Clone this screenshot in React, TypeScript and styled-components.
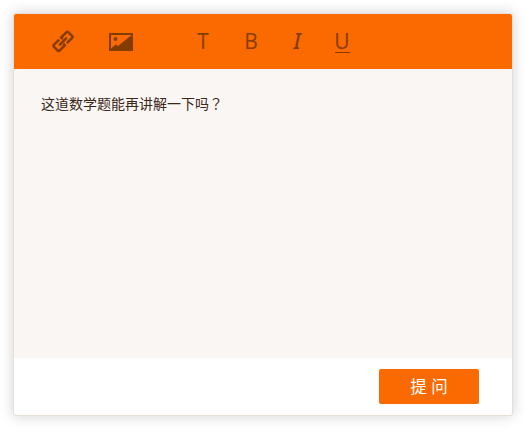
import React from 'react';
import styled, { createGlobalStyle } from 'styled-components';

const ink = '#843c02';
const orange = '#fa6a00';

const GlobalStyle = createGlobalStyle`
  * { box-sizing: border-box; }
  body {
    margin: 0;
    background: #fff;
    font-family: "Noto Sans", "Noto Sans CJK SC", sans-serif;
  }
`;

const Page = styled.main`
  width: 526px;
  height: 429px;
  padding: 13px;
  overflow: hidden;
`;

const Card = styled.section`
  display: flex;
  flex-direction: column;
  width: 500px;
  height: 403px;
  border: 1px solid #e6dfd8;
  border-radius: 3px;
  background: #fff;
  box-shadow: 0 0 14px rgba(0, 0, 0, 0.18);
  overflow: hidden;
`;

const Toolbar = styled.header`
  display: flex;
  align-items: center;
  height: 55px;
  padding-left: 34px;
  background: ${orange};
`;

const Tool = styled.button<{ $width: number; $gap?: number }>`
  display: flex;
  align-items: center;
  justify-content: center;
  width: ${(p) => p.$width}px;
  height: 30px;
  margin: 0 ${(p) => p.$gap ?? 0}px 0 0;
  padding: 0;
  border: 0;
  background: none;
  color: ${ink};
  cursor: pointer;
`;

const Glyph = styled.span<{ $italic?: boolean; $underlined?: boolean }>`
  display: flex;
  justify-content: center;
  width: 15px;
  height: 24px;
  margin-bottom: 2px;
  border-bottom: 1px solid ${(p) => (p.$underlined ? ink : 'transparent')};
  font-family: ${(p) => (p.$italic ? '"Noto Sans"' : '"Open Sans"')}, sans-serif;
  font-size: 21px;
  font-style: ${(p) => (p.$italic ? 'italic' : 'normal')};
  font-weight: ${(p) => (p.$italic ? 500 : 400)};
  line-height: 25px;
`;

const Question = styled.div`
  height: 289px;
  padding: 24px 27px;
  background: #faf6f3;
  color: #3b2819;
  font-size: 14px;
  line-height: 21px;
`;

const CentredMark = styled.span`
  font-family: "Noto Sans CJK TC", sans-serif;
`;

const Footer = styled.footer`
  display: flex;
  flex: 1;
  justify-content: flex-end;
  padding: 11px 33px 0 0;
`;

const AskButton = styled.button`
  width: 100px;
  height: 35px;
  padding: 0;
  border: 0;
  border-radius: 2px;
  background: ${orange};
  color: #fff;
  font: 400 16.5px/35px "Noto Sans", "Noto Sans CJK SC", sans-serif;
  cursor: pointer;
`;

const LinkIcon = () => (
  <svg width="24" height="24" viewBox="0 0 24 24" fill="none" stroke="currentColor" strokeWidth="2.5">
    <g transform="translate(0 -.6) rotate(-45 12 12)">
      <path d="M10.6 8H3Q1.8 8 1.8 9.2V14.8Q1.8 16 3 16H10.6V13.8" />
      <path d="M13.4 16H21Q22.2 16 22.2 14.8V9.2Q22.2 8 21 8H13.4V10.2" />
      <path d="M6.5 12H17.5" />
    </g>
  </svg>
);

const PictureIcon = () => (
  <svg width="24" height="18" viewBox="0 0 24 18" fill="currentColor">
    <path fillRule="evenodd" d="M0 0H24V18H0ZM2 2V15.5L7 11.2L9 13L22 2.5V2Z" />
    <circle cx="6.5" cy="6" r="1.9" />
  </svg>
);

export default function App() {
  return (
    <>
      <GlobalStyle />
      <Page>
        <Card>
          <Toolbar>
            <Tool $width={30} $gap={27} aria-label="链接"><LinkIcon /></Tool>
            <Tool $width={32} $gap={51} aria-label="图片"><PictureIcon /></Tool>
            <Tool $width={30} $gap={18} aria-label="文字"><Glyph>T</Glyph></Tool>
            <Tool $width={30} $gap={16} aria-label="粗体"><Glyph>B</Glyph></Tool>
            <Tool $width={30} $gap={15} aria-label="斜体"><Glyph $italic>I</Glyph></Tool>
            <Tool $width={30} aria-label="下划线"><Glyph $underlined>U</Glyph></Tool>
          </Toolbar>
          <Question>这道数学题能再讲解一下吗<CentredMark>？</CentredMark></Question>
          <Footer>
            <AskButton>提 问</AskButton>
          </Footer>
        </Card>
      </Page>
    </>
  );
}
